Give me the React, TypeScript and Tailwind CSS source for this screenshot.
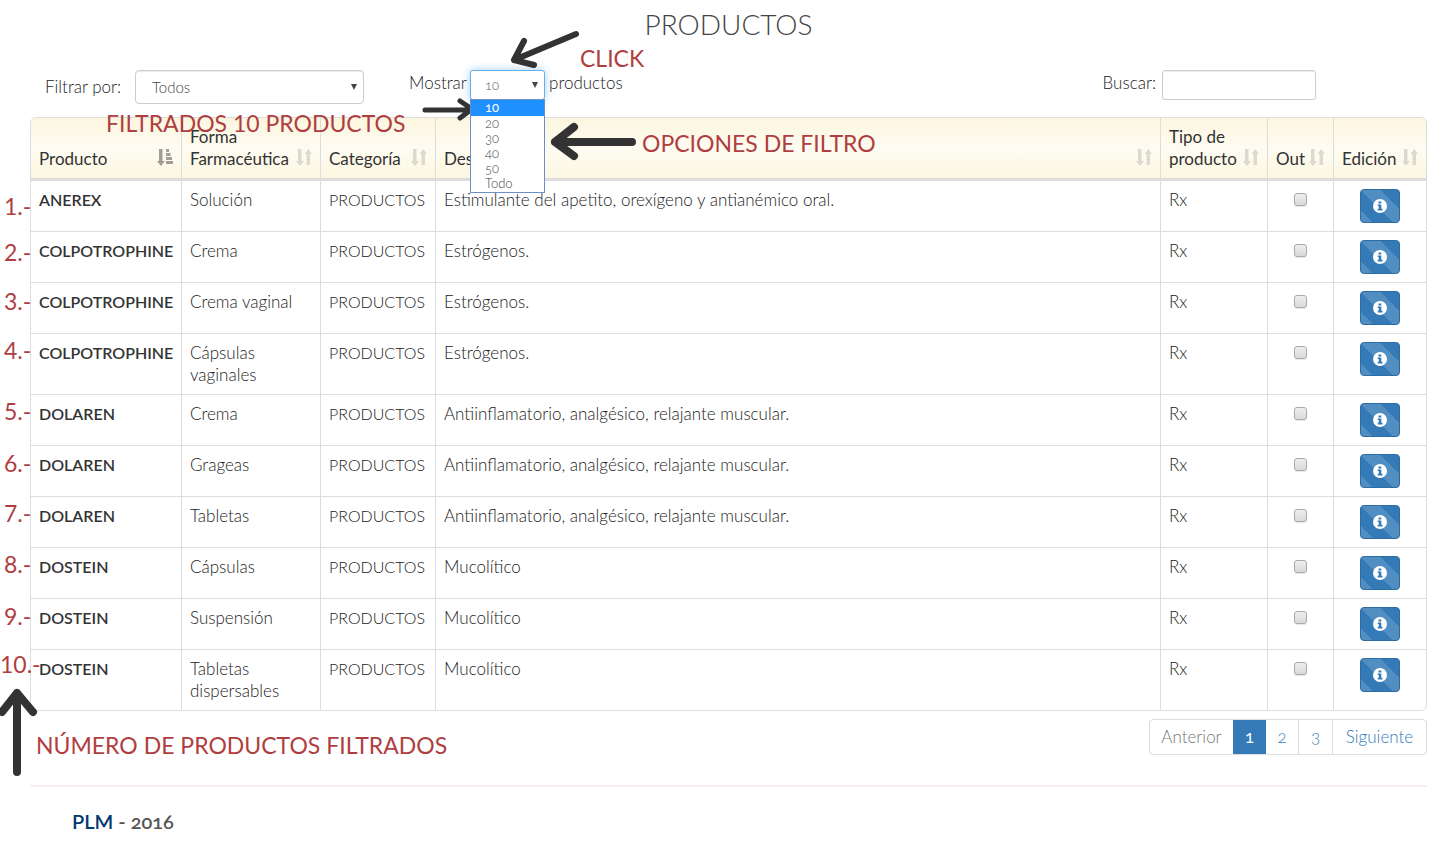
import type { ReactNode } from "react";

type Product = { name: string; form: string; description: string };

const ANTI = "Antiinflamatorio, analgésico, relajante muscular.";

const products: Product[] = [
  { name: "ANEREX", form: "Solución", description: "Estimulante del apetito, orexígeno y antianémico oral." },
  { name: "COLPOTROPHINE", form: "Crema", description: "Estrógenos." },
  { name: "COLPOTROPHINE", form: "Crema vaginal", description: "Estrógenos." },
  { name: "COLPOTROPHINE", form: "Cápsulas vaginales", description: "Estrógenos." },
  { name: "DOLAREN", form: "Crema", description: ANTI },
  { name: "DOLAREN", form: "Grageas", description: ANTI },
  { name: "DOLAREN", form: "Tabletas", description: ANTI },
  { name: "DOSTEIN", form: "Cápsulas", description: "Mucolítico" },
  { name: "DOSTEIN", form: "Suspensión", description: "Mucolítico" },
  { name: "DOSTEIN", form: "Tabletas dispersables", description: "Mucolítico" },
];

function SortIcon({ active = false }: { active?: boolean }) {
  return (
    <svg viewBox="0 0 16 17" className={`mb-1 h-[17px] w-4 shrink-0 ${active ? "fill-[#a09e96]" : "fill-[#dcdad0]"}`} aria-hidden="true">
      <path d="M2 0h3.500v12H8l-4 5-4-5h2z" />
      {active ? <path d="M9 0h3v3H9zM9 4h4.500v3H9zM9 8h6v3H9zM9 12h7v3H9z" /> : <path d="M10.500 16h3.500V5h2l-3.700-5L8.500 5h2z" />}
    </svg>
  );
}

function InfoIcon() {
  return (
    <svg viewBox="0 0 14 14" className="mb-px h-[14px] w-[14px]" aria-hidden="true">
      <circle cx="7" cy="7" r="7" className="fill-white" />
      <path d="M5.500 2.500h2.800v2H5.500zM4.700 5.500h3.600v4.200h1.200v1.700H4.700V9.700h1.100V7.100H4.700z" className="fill-[#337ab7]" />
    </svg>
  );
}

function HeaderCell({ children, active, first }: { children: ReactNode; active?: boolean; first?: boolean }) {
  return (
    <th scope="col" className={`border-b-[3px] border-[#ddd] p-2 align-bottom font-normal ${first ? "" : "border-l"}`}>
      <div className="flex items-end justify-between text-left">
        <span>{children}</span>
        <SortIcon active={active} />
      </div>
    </th>
  );
}

function Caret({ className }: { className: string }) {
  return (
    <svg viewBox="0 0 6 6" className={`pointer-events-none absolute h-[6px] w-[6px] fill-[#444] ${className}`} aria-hidden="true">
      <path d="M0 0h6L3 6z" />
    </svg>
  );
}

function Note({ className, children }: { className: string; children: ReactNode }) {
  return (
    <span className={`pointer-events-none absolute whitespace-nowrap text-[23px] leading-8 font-normal text-[#b03e40] ${className}`}>
      {children}
    </span>
  );
}

function Arrow({ className, box, d, width }: { className: string; box: string; d: string; width: number }) {
  return (
    <svg viewBox={box} className={`pointer-events-none absolute overflow-visible fill-none stroke-[#333] ${className}`} strokeWidth={width} strokeLinecap="round" strokeLinejoin="round" aria-hidden="true">
      <path d={d} />
    </svg>
  );
}

const stepPositions = [
  "top-[190px] left-1",
  "top-[236px] left-1",
  "top-[285px] left-1",
  "top-[334px] left-1",
  "top-[395px] left-1",
  "top-[447px] left-1",
  "top-[497px] left-1",
  "top-[548px] left-1",
  "top-[600px] left-1",
  "top-[648px] left-0",
];

function Annotations() {
  return (
    <div className="pointer-events-none absolute inset-0">
      <Note className="top-[42px] left-[580px]">CLICK</Note>
      <Note className="top-[107px] left-[106px]">FILTRADOS 10 PRODUCTOS</Note>
      <Note className="top-[127px] left-[642px]">OPCIONES DE FILTRO</Note>
      <Note className="top-[729px] left-9">NÚMERO DE PRODUCTOS FILTRADOS</Note>
      {stepPositions.map((position, i) => (
        <Note key={position} className={position}>{i + 1}.-</Note>
      ))}
      <Arrow className="top-[30px] left-[510px] h-[38px] w-[70px]" box="0 0 70 38" width={6} d="M66 4L4 30M14 11L4 30L24 35" />
      <Arrow className="top-[98px] left-[422px] h-6 w-[52px]" box="0 0 52 24" width={5} d="M3 12H49M38 3L50 11L38 20" />
      <Arrow className="top-[123px] left-[550px] h-[38px] w-[86px]" box="0 0 86 38" width={8} d="M82 19H5M24 4L5 19L24 33" />
      <Arrow className="top-[687px] left-0 h-[90px] w-[37px]" box="0 0 37 90" width={8} d="M17 85V6M2 25L17 6L33 25" />
    </div>
  );
}

export default function App() {
  return (
    <div className="relative overflow-x-hidden pr-6 pb-3 pl-[30px] font-['Lato',sans-serif] text-[17px] leading-[22px] font-light text-[#222]">
      <h1 className="pt-2 text-center text-[28px] leading-8 text-[#444]">PRODUCTOS</h1>

      <div className="flex h-[77px] items-start pt-[30px]">
        <div className="flex w-[379px] items-center pl-[15px]">
          <label htmlFor="filter" className="w-[90px]">Filtrar por:</label>
          <div className="relative">
            <select id="filter" className="block h-[34px] w-[229px] appearance-none rounded border border-[#ccc] bg-white px-4 text-[15px] text-[#444] shadow-[inset_0_1px_1px_rgba(0,0,0,0.075)]">
              <option>Todos</option>
            </select>
            <Caret className="top-[14px] right-[7px]" />
          </div>
        </div>
        <div className="flex">
          <label htmlFor="length" className="w-[61px] pt-[2px]">Mostrar</label>
          <div className="relative">
            <select id="length" className="block h-[30px] w-[75px] appearance-none rounded-[3px] border border-[#66afe9] bg-white px-[14px] text-[13px] text-[#555] oldstyle-nums shadow-[0_0_8px_rgba(102,175,233,0.6)] outline-none">
              <option>10</option>
            </select>
            <Caret className="top-3 right-[7px]" />
            <ul className="absolute top-[29px] left-0 z-10 w-[75px] border border-[#6d8fc9] bg-white pb-px text-[13px] leading-[15px] text-[#444] oldstyle-nums" role="listbox" aria-label="Mostrar">
              <li role="option" aria-selected="true" className="bg-[#1e90ff] px-[14px] pb-px font-normal text-white">10</li>
              {["20", "30", "40", "50", "Todo"].map((n) => (
                <li key={n} role="option" aria-selected="false" className="px-[14px]">{n}</li>
              ))}
            </ul>
          </div>
          <span className="pt-[2px] pl-1">productos</span>
        </div>
        <div className="mr-[111px] ml-auto flex">
          <label htmlFor="search" className="pt-[2px] pr-[6px]">Buscar:</label>
          <input id="search" type="search" className="h-[30px] w-[154px] rounded-[3px] border border-[#ccc] bg-white px-2 shadow-[inset_0_1px_1px_rgba(0,0,0,0.075)]" />
        </div>
      </div>

      <div className="overflow-hidden rounded-md border border-[#ddd]">
        <table className="w-full table-fixed border-separate border-spacing-0">
          <colgroup>
            <col className="w-[150px]" />
            <col className="w-[139px]" />
            <col className="w-[115px]" />
            <col />
            <col className="w-[107px]" />
            <col className="w-[66px]" />
            <col className="w-[93px]" />
          </colgroup>
          <thead className="bg-linear-to-b from-[#fcf6df] via-[#fefcf2] to-[#fcf6df] text-[#333]">
            <tr>
              <HeaderCell first active>Producto</HeaderCell>
              <HeaderCell>Forma Farmacéutica</HeaderCell>
              <HeaderCell>Categoría</HeaderCell>
              <HeaderCell>Descripción</HeaderCell>
              <HeaderCell>Tipo de producto</HeaderCell>
              <HeaderCell>Out</HeaderCell>
              <HeaderCell>Edición</HeaderCell>
            </tr>
          </thead>
          <tbody className="[&_td]:border-[#ddd] [&_td]:p-2 [&_td]:align-top [&_td+td]:border-l [&_tr+tr>td]:border-t">
            {products.map((p, i) => (
              <tr key={i}>
                <td className="text-base leading-[22px] font-semibold text-[#333]">{p.name}</td>
                <td>{p.form}</td>
                <td className="text-base leading-[22px]">PRODUCTOS</td>
                <td>{p.description}</td>
                <td>Rx</td>
                <td>
                  <input type="checkbox" aria-label={`Out ${p.name} ${p.form}`} className="mx-auto mt-1 block h-[13px] w-[13px] appearance-none rounded-[3px] border border-[#aaa] bg-linear-to-b from-[#eee] to-[#d9d9d9] shadow-[0_1px_1px_rgba(0,0,0,0.1)]" />
                </td>
                <td>
                  <button type="button" aria-label={`Editar ${p.name} ${p.form}`} className="mx-auto flex h-[34px] w-10 items-center justify-center rounded border border-[#2e6da4] bg-[#337ab7] bg-[linear-gradient(45deg,rgba(255,255,255,0.15)_25%,transparent_25%,transparent_50%,rgba(255,255,255,0.15)_50%,rgba(255,255,255,0.15)_75%,transparent_75%)] bg-[length:40px_40px]">
                    <InfoIcon />
                  </button>
                </td>
              </tr>
            ))}
          </tbody>
        </table>
      </div>

      <nav aria-label="Paginación" className="mt-2 flex justify-end">
        <div className="flex h-9 overflow-hidden rounded border border-[#ddd] text-[#337ab7] oldstyle-nums">
          <button type="button" disabled className="w-[83px] text-[#777]">Anterior</button>
          <a href="#1" aria-current="page" className="-my-px flex w-[33px] items-center justify-center bg-[#337ab7] font-normal text-white">1</a>
          <a href="#2" className="flex w-8 items-center justify-center">2</a>
          <a href="#3" className="flex w-[34px] items-center justify-center border-l border-[#ddd]">3</a>
          <a href="#siguiente" className="flex w-[94px] items-center justify-center border-l border-[#ddd]">Siguiente</a>
        </div>
      </nav>

      <footer className="mt-[30px] border-t-2 border-[#fceeee] pt-[22px] pl-[42px] text-xl leading-6 font-semibold text-[#555] oldstyle-nums">
        <a href="#plm" className="text-[#003a70]">PLM</a> - 2016
      </footer>

      <Annotations />
    </div>
  );
}
